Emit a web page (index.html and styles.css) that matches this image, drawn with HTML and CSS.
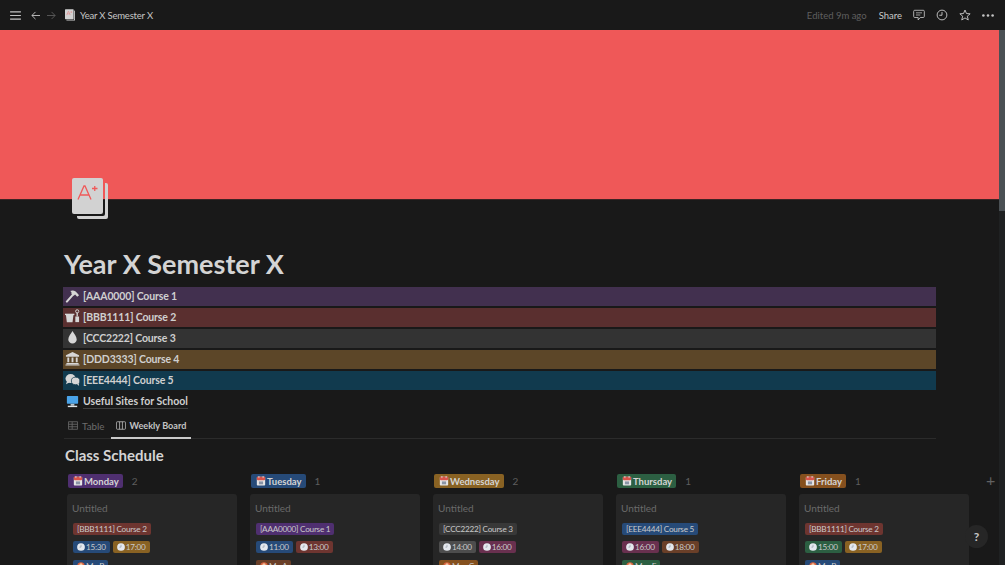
FILE: index.html
```html
<!DOCTYPE html>
<html lang="en">
<head>
<meta charset="utf-8">
<title>Year X Semester X</title>
<link rel="stylesheet" href="styles.css">
</head>
<body>
<svg class="defs" width="0" height="0" aria-hidden="true">
  <symbol id="cal" viewBox="0 0 12 12">
    <rect x="1" y="1" width="10" height="10.500" rx="1" fill="#e6e6e6"/>
    <rect x="1" y="1" width="10" height="4" rx="1" fill="#d9534a"/>
    <rect x="3" y="0" width="1" height="2.500" fill="#ddd"/><rect x="8" y="0" width="1" height="2.500" fill="#ddd"/>
    <rect x="3.500" y="6.500" width="5" height="3.500" fill="#8a94a6"/>
  </symbol>
  <symbol id="clock" viewBox="0 0 12 12">
    <circle cx="6" cy="6" r="5.800" fill="#e4e8ee"/>
    <path d="M6 2.800V6.200H3.600" fill="none" stroke="#7a8492" stroke-width=".8"/>
  </symbol>
  <symbol id="person" viewBox="0 0 12 12">
    <circle cx="6" cy="6" r="5.500" fill="#d9623f"/>
    <circle cx="6" cy="4.500" r="2.500" fill="#f0c4a0"/>
  </symbol>
  <symbol id="book" viewBox="0 0 36 42">
    <path d="M33 5h1a2 2 0 0 1 2 2v32a2 2 0 0 1-2 2H7a2 2 0 0 1-2-2v-1h26a2 2 0 0 0 2-2z" fill="#d2d2d2"/>
    <path d="M2 0h27a2 2 0 0 1 2 2v32a2 2 0 0 1-2 2H2a2 2 0 0 1-2-2V2a2 2 0 0 1 2-2z" fill="#d2d2d2"/>
    <path d="M6 21.500 12 8h1l6 13.500M8 17h9" fill="none" stroke="#ef5a5a" stroke-width="1.300"/>
    <path d="M20 10.500h5.500M22.750 8v5" fill="none" stroke="#ef5a5a" stroke-width="1.300"/>
  </symbol>
</svg>

<header class="topbar">
  <div class="nav">
    <svg class="ic-menu" viewBox="0 0 12 10"><path d="M0 1h12M0 5h12M0 9h12" stroke="#c4c4c4" stroke-width="1.200"/></svg>
    <svg class="ic-arrow" viewBox="0 0 10 10"><path d="M10 5H1M5 1 1 5l4 4" fill="none" stroke="#c4c4c4" stroke-width="1"/></svg>
    <svg class="ic-arrow" viewBox="0 0 10 10"><path d="M0 5h9M5 1l4 4-4 4" fill="none" stroke="#5c5c5c" stroke-width="1"/></svg>
    <svg class="ic-page"><use href="#book"/></svg>
    <span class="crumb">Year X Semester X</span>
  </div>
  <div class="actions">
    <span class="edited">Edited 9m ago</span>
    <span class="share">Share</span>
    <svg class="ic-act" viewBox="0 0 14 14"><path d="M2 1.500h10a1.200 1.200 0 0 1 1.200 1.200v6a1.200 1.200 0 0 1-1.200 1.200H8.500L6 12.800V9.900H2A1.200 1.200 0 0 1 .8 8.700v-6A1.200 1.200 0 0 1 2 1.500z" fill="none" stroke="#c4c4c4"/><path d="M3.500 4.500h7M3.500 7h5" stroke="#c4c4c4" stroke-width=".9"/></svg>
    <svg class="ic-act" viewBox="0 0 14 14"><circle cx="7" cy="7" r="5.700" fill="none" stroke="#c4c4c4" stroke-width="1.100"/><path d="M7 3.500V7.300H3.800" fill="none" stroke="#c4c4c4" stroke-width="1.100"/></svg>
    <svg class="ic-act" viewBox="0 0 14 14"><path d="M7 1.200 8.700 5.300 13 5.600 9.700 8.400 10.800 12.800 7 10.400 3.200 12.800 4.300 8.400 1 5.600 5.300 5.300z" fill="none" stroke="#c4c4c4" stroke-width="1.100" stroke-linejoin="round"/></svg>
    <svg class="ic-more" viewBox="0 0 13 3"><circle cx="1.500" cy="1.500" r="1.400" fill="#c4c4c4"/><circle cx="6.500" cy="1.500" r="1.400" fill="#c4c4c4"/><circle cx="11.500" cy="1.500" r="1.400" fill="#c4c4c4"/></svg>
  </div>
</header>

<main class="page">
  <div class="cover"></div>
  <div class="content">
    <svg class="page-icon"><use href="#book"/></svg>
    <h1 class="title">Year X Semester X</h1>

    <ul class="links">
      <li class="link purple">
        <svg class="ic-link" viewBox="0 0 16 16"><path d="M2 14.500 8.500 7" fill="none" stroke="#d6d6d6" stroke-width="2.200" stroke-linecap="round"/><path d="M5.500 3.200C8.500 1.800 11.500 2.500 15 7.800L13 9.200 10.800 6.800 9.200 8.200 6.800 6C7.200 4.800 6.800 4 5.500 3.200z" fill="#d6d6d6"/></svg>
        <span class="link-text">[AAA0000] Course 1</span>
      </li>
      <li class="link red">
        <svg class="ic-link" viewBox="0 0 16 16"><path d="M1 6.500h8L8 14H2z" fill="#d6d6d6"/><path d="M0 5h10v1.500H0z" fill="#d6d6d6"/><rect x="11" y="8" width="4" height="6" fill="#d6d6d6"/><rect x="12.300" y="4" width="1.400" height="4" fill="#d6d6d6"/><circle cx="13" cy="2.500" r="1.700" fill="none" stroke="#d6d6d6"/></svg>
        <span class="link-text">[BBB1111] Course 2</span>
      </li>
      <li class="link grey">
        <svg class="ic-link" viewBox="0 0 16 16"><path d="M8 1c1.500 3 4.500 5.500 4.500 9a4.500 4.500 0 0 1-9 0C3.500 6.500 6.500 4 8 1z" fill="#d6d6d6"/></svg>
        <span class="link-text">[CCC2222] Course 3</span>
      </li>
      <li class="link brown">
        <svg class="ic-link" viewBox="0 0 16 16"><path d="M8 1 15 4.500V6H1V4.500zM2.500 7h2v5h-2zM7 7h2v5H7zM11.500 7h2v5h-2zM1.500 12.800h13V14h-13zM.5 14.500h15V15.500H.5z" fill="#d6d6d6"/></svg>
        <span class="link-text">[DDD3333] Course 4</span>
      </li>
      <li class="link blue">
        <svg class="ic-link" viewBox="0 0 16 16"><ellipse cx="6" cy="7" rx="5.500" ry="4.800" fill="#d6d6d6"/><path d="M2 10 1 13l4-2z" fill="#d6d6d6"/><ellipse cx="11.300" cy="9.500" rx="4.500" ry="4" fill="#d6d6d6" stroke="#113a4e" stroke-width=".8"/><path d="M13 13l2 1.800-.3-3z" fill="#d6d6d6"/></svg>
        <span class="link-text">[EEE4444] Course 5</span>
      </li>
      <li class="link plain">
        <svg class="ic-link" viewBox="0 0 16 16"><rect x="2" y="2" width="12" height="8.500" rx=".8" fill="#4aa3e8"/><rect x="6" y="10.500" width="4" height="2" fill="#b8c4cc"/><rect x="3" y="12.500" width="10" height="1.500" fill="#dfe4e8"/></svg>
        <span class="link-text underlined">Useful Sites for School</span>
      </li>
    </ul>

    <nav class="tabs">
      <span class="tab">
        <svg class="ic-tab" viewBox="0 0 12 10"><path d="M.5.500h11v9H.500zM.5 3.500h11M.5 6.500h11M5 .5v9" fill="none" stroke="#6b6b6b"/></svg>
        Table
      </span>
      <span class="tab active">
        <svg class="ic-tab" viewBox="0 0 12 10"><path d="M1.500.500h9a1 1 0 0 1 1 1v7a1 1 0 0 1-1 1h-9a1 1 0 0 1-1-1v-7a1 1 0 0 1 1-1zM4.300.5v9M7.700.5v9" fill="none" stroke="#b5b5b5"/></svg>
        Weekly Board
      </span>
    </nav>

    <h2 class="section">Class Schedule</h2>

    <div class="board">
      <section class="col">
        <div class="col-head"><span class="day t-purple"><svg class="ic-cal"><use href="#cal"/></svg>Monday</span><span class="count">2</span></div>
        <article class="card">
          <p class="untitled">Untitled</p>
          <div class="row"><span class="tag t-red">[BBB1111] Course 2</span></div>
          <div class="row"><span class="tag t-blue"><svg class="ic-sm"><use href="#clock"/></svg>15:30</span><span class="tag t-yellow"><svg class="ic-sm"><use href="#clock"/></svg>17:00</span></div>
          <div class="row"><span class="tag t-blue"><svg class="ic-sm"><use href="#person"/></svg>Mr. B</span></div>
        </article>
      </section>
      <section class="col">
        <div class="col-head"><span class="day t-blue"><svg class="ic-cal"><use href="#cal"/></svg>Tuesday</span><span class="count">1</span></div>
        <article class="card">
          <p class="untitled">Untitled</p>
          <div class="row"><span class="tag t-purple">[AAA0000] Course 1</span></div>
          <div class="row"><span class="tag t-blue"><svg class="ic-sm"><use href="#clock"/></svg>11:00</span><span class="tag t-red"><svg class="ic-sm"><use href="#clock"/></svg>13:00</span></div>
          <div class="row"><span class="tag t-brown"><svg class="ic-sm"><use href="#person"/></svg>Mr. A</span></div>
        </article>
      </section>
      <section class="col">
        <div class="col-head"><span class="day t-yellow"><svg class="ic-cal"><use href="#cal"/></svg>Wednesday</span><span class="count">2</span></div>
        <article class="card">
          <p class="untitled">Untitled</p>
          <div class="row"><span class="tag t-grey">[CCC2222] Course 3</span></div>
          <div class="row"><span class="tag t-midgrey"><svg class="ic-sm"><use href="#clock"/></svg>14:00</span><span class="tag t-pink"><svg class="ic-sm"><use href="#clock"/></svg>16:00</span></div>
          <div class="row"><span class="tag t-orange"><svg class="ic-sm"><use href="#person"/></svg>Mrs. C</span></div>
        </article>
      </section>
      <section class="col">
        <div class="col-head"><span class="day t-green"><svg class="ic-cal"><use href="#cal"/></svg>Thursday</span><span class="count">1</span></div>
        <article class="card">
          <p class="untitled">Untitled</p>
          <div class="row"><span class="tag t-blue">[EEE4444] Course 5</span></div>
          <div class="row"><span class="tag t-pink"><svg class="ic-sm"><use href="#clock"/></svg>16:00</span><span class="tag t-brown"><svg class="ic-sm"><use href="#clock"/></svg>18:00</span></div>
          <div class="row"><span class="tag t-green"><svg class="ic-sm"><use href="#person"/></svg>Mrs. E</span></div>
        </article>
      </section>
      <section class="col">
        <div class="col-head"><span class="day t-orange"><svg class="ic-cal"><use href="#cal"/></svg>Friday</span><span class="count">1</span></div>
        <article class="card">
          <p class="untitled">Untitled</p>
          <div class="row"><span class="tag t-red">[BBB1111] Course 2</span></div>
          <div class="row"><span class="tag t-green"><svg class="ic-sm"><use href="#clock"/></svg>15:00</span><span class="tag t-yellow"><svg class="ic-sm"><use href="#clock"/></svg>17:00</span></div>
          <div class="row"><span class="tag t-blue"><svg class="ic-sm"><use href="#person"/></svg>Mr. B</span></div>
        </article>
      </section>
      <span class="add">+</span>
    </div>
  </div>
  <div class="scrollbar"><div class="thumb"></div></div>
  <button class="help">?</button>
</main>
</body>
</html>
```

FILE: styles.css
```css
* { box-sizing: border-box; }
html, body { margin: 0; height: 565px; overflow: hidden; }
body {
  background: #191919;
  color: #d4d4d4;
  font-family: Lato, "Open Sans", "Liberation Sans", sans-serif;
  display: flex;
  flex-direction: column;
}
.defs { display: block; height: 0; }

.topbar {
  height: 30px;
  flex: none;
  display: flex;
  align-items: center;
  justify-content: space-between;
  padding: 0 11px 0 10px;
  font-size: 9.500px;
}
.nav, .actions { display: flex; align-items: center; }
.ic-menu { width: 11px; height: 9px; }
.ic-arrow { width: 9px; height: 9px; margin-left: 10px; }
.ic-arrow + .ic-arrow { margin-left: 7px; }
.ic-page { width: 10px; height: 12px; margin-left: 9px; margin-right: 5px; overflow: visible; }
.crumb { color: #c6c6c6; letter-spacing: -.2px; }
.edited { color: #5f5f5f; margin-right: 12px; }
.share { color: #c9c9c9; margin-right: 11px; }
.ic-act { width: 12px; height: 12px; margin-right: 11px; }
.ic-more { width: 12px; height: 3px; }

.page { position: relative; flex: 1; overflow: hidden; }
.cover { height: 170px; background: #ef5858; border-bottom: 1px solid #3d2424; }
.content { padding: 0 69px 0 64px; margin-top: -22px; }
.page-icon { display: block; width: 36px; height: 42px; margin-left: 8px; position: relative; }

.title {
  margin: 28px 0 0 0;
  font-size: 27px;
  line-height: 32px;
  font-weight: 700;
  color: #d4d4d4;
}
.links { list-style: none; margin: 7px 0 0 -1px; padding: 0; display: flex; flex-direction: column; gap: 2px; }
.link {
  height: 19px;
  display: flex;
  align-items: center;
  padding: 0 0 2px 2px;
  font-size: 10.500px;
  letter-spacing: -.15px;
  font-weight: 700;
  color: #cfcfcf;
}
.purple { background: #42304f; }
.red { background: #5a2f2f; }
.grey { background: #333333; }
.brown { background: #5c4628; }
.blue { background: #113a4e; }
.plain { background: none; padding-bottom: 0; letter-spacing: 0; }
.ic-link { width: 15px; height: 15px; margin-right: 3px; flex: none; }
.underlined { border-bottom: 1px solid #3f3f3f; line-height: 13px; }

.tabs {
  display: flex;
  gap: 1px;
  margin: 3px 0 0 0;
  height: 25px;
  border-bottom: 1px solid #2b2b2b;
  font-size: 9.800px;
}
.tab { display: flex; align-items: center; gap: 4px; padding: 0 5px 2px 4px; color: #6c6c6c; height: 25px; }
.tab.active { color: #c4c4c4; border-bottom: 2px solid #c9c9c9; padding: 0 5px; font-size: 9.100px; font-weight: 700; }
.ic-tab { width: 10px; height: 9px; }

.section { margin: 6px 0 0 1px; font-size: 15px; line-height: 20px; font-weight: 700; color: #d4d4d4; }

.board { position: relative; display: flex; gap: 13px; margin: 9px 0 0 3px; width: 934px; }
.col { width: 170px; flex: none; }
.col-head { display: flex; align-items: center; height: 14px; padding-left: 1px; }
.day {
  display: inline-flex;
  align-items: center;
  height: 14px;
  padding: 0 4px 0 5px;
  border-radius: 2px;
  font-size: 9.500px;
  font-weight: 700;
  color: #d4d4d4;
}
.ic-cal { width: 10px; height: 10px; margin-right: 1px; }
.count { margin-left: 9px; font-size: 10px; color: #5e5e5e; }
.add { position: absolute; left: 919px; top: -2px; color: #626262; font-size: 16px; line-height: 16px; }

.card { margin-top: 6px; height: 90px; padding: 8px 5px 0 5px; background: #262626; border-radius: 3px; }
.untitled { margin: 0 0 8px 0; font-size: 10px; line-height: 13px; color: #6a6a6a; }
.row { display: flex; gap: 3px; margin-bottom: 6.300px; padding-left: 1px; }
.tag {
  display: inline-flex;
  align-items: center;
  height: 12px;
  padding: 0 4px;
  border-radius: 2px;
  font-size: 8.200px;
  letter-spacing: -.25px;
  color: #c9c9c9;
  white-space: nowrap;
}
.ic-sm { width: 8px; height: 8px; margin-right: 1px; }

.t-purple { background: #4f2f70; }
.t-red { background: #6e3530; }
.t-blue { background: #264a78; }
.t-yellow { background: #896223; }
.t-brown { background: #6a3f28; }
.t-grey { background: #383838; }
.t-midgrey { background: #4d4d4d; }
.t-pink { background: #69304f; }
.t-green { background: #2c5f42; }
.t-orange { background: #85501e; }

.scrollbar { position: absolute; right: 0; top: 0; bottom: 0; width: 6px; background: #1f2122; }
.thumb { height: 181px; background: #4a5054; }
.help {
  position: absolute;
  left: 965px;
  top: 495px;
  width: 23px;
  height: 23px;
  border: 0;
  border-radius: 50%;
  padding: 0;
  background: #262626;
  color: #c8c8c8;
  font: 700 12px Lato, sans-serif;
}
```
